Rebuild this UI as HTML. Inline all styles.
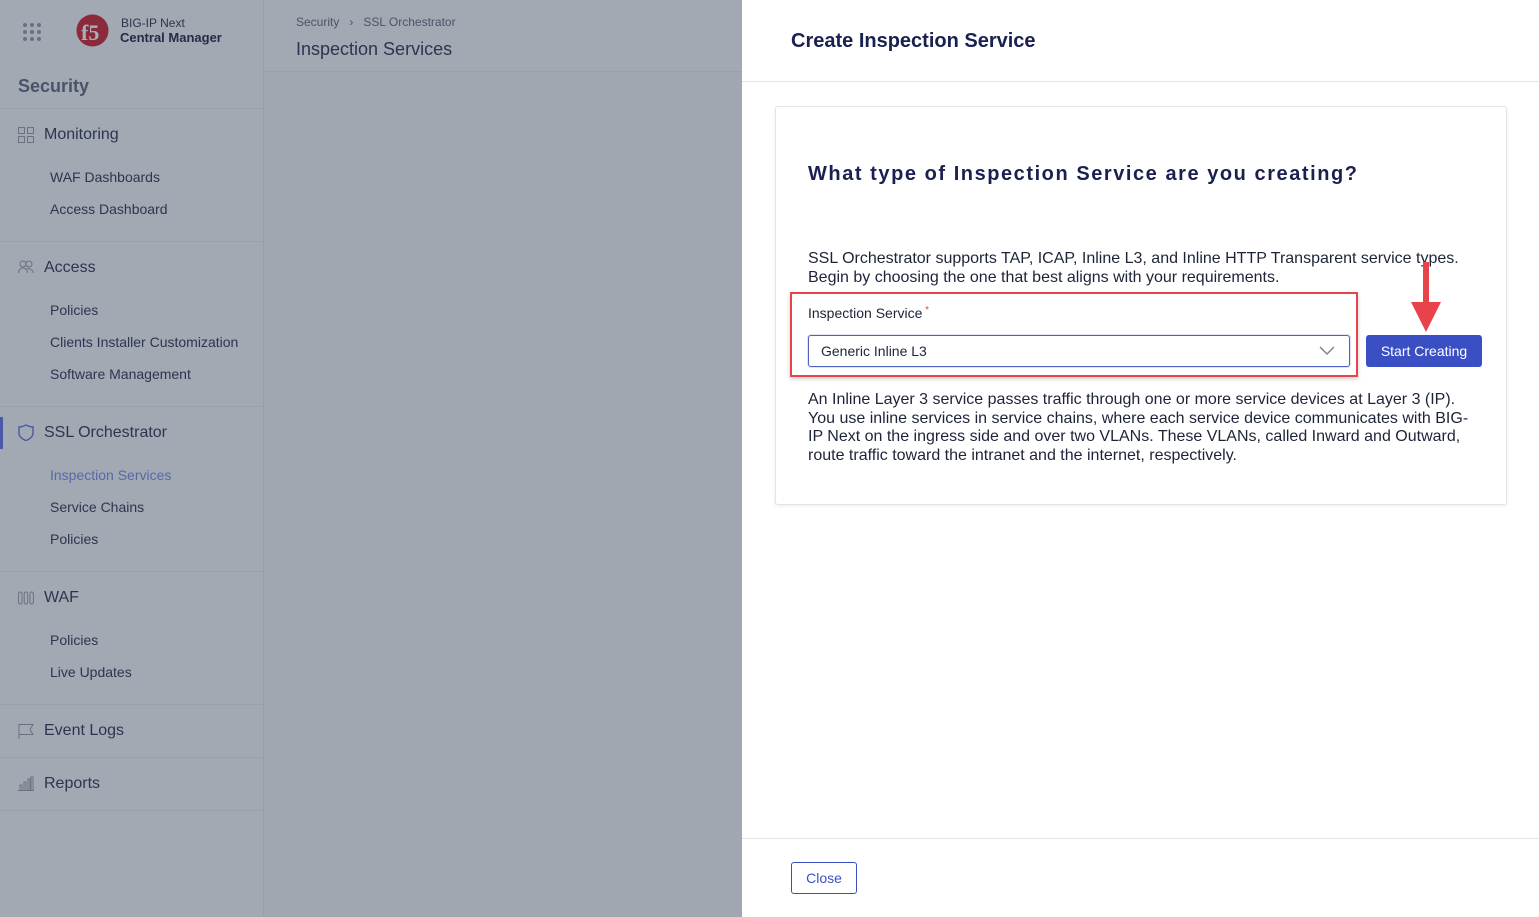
<!DOCTYPE html>
<html><head><style>
*{margin:0;padding:0;box-sizing:border-box}
body{width:1539px;height:917px;overflow:hidden;font-family:"Liberation Sans",Arial,sans-serif;background:#a0a7b0;position:relative}
.side{position:absolute;left:0;top:0;width:264px;height:917px;background:#a2a9b3;border-right:1px solid #98a0aa}
.main{position:absolute;left:264px;top:0;width:478px;height:917px;background:#a0a7b0}
.mhead{height:72px;border-bottom:1px solid #98a0aa;background:#a2a9b3}
.t{position:absolute;white-space:nowrap}
.sep{position:absolute;left:0;width:264px;height:1px;background:#98a0aa}
.grp{font-size:16px;color:#2c3550}
.sub{font-size:14px;color:#2c3550}
.panel{position:absolute;left:742px;top:0;width:797px;height:917px;background:#fff}
</style></head><body>
<div class="side">
  <svg class="t" style="left:22px;top:22px" width="20" height="20" viewBox="0 0 20 20" fill="#6a7282">
    <circle cx="3" cy="3" r="2"/><circle cx="10" cy="3" r="2"/><circle cx="17" cy="3" r="2"/>
    <circle cx="3" cy="10" r="2"/><circle cx="10" cy="10" r="2"/><circle cx="17" cy="10" r="2"/>
    <circle cx="3" cy="17" r="2"/><circle cx="10" cy="17" r="2"/><circle cx="17" cy="17" r="2"/>
  </svg>
  <svg class="t" style="left:76px;top:14px" width="33" height="33" viewBox="0 0 33 33"><circle cx="16.5" cy="16.5" r="16" fill="#8a2a3a"/><text x="5" y="26" font-family="Liberation Serif" font-size="22" fill="#a9b0ba" font-weight="bold">f5</text></svg>
  <div class="t" style="left:121px;top:16px;font-size:12px;color:#2c3550">BIG-IP Next</div>
  <div class="t" style="left:120px;top:30px;font-size:13px;color:#232c48;font-weight:bold">Central Manager</div>
  <div class="t" style="left:18px;top:76px;font-size:18px;font-weight:bold;color:#4a5468">Security</div>
  <div class="sep" style="top:108px"></div>
  <svg class="t" style="left:18px;top:127px" width="16" height="16" viewBox="0 0 16 16" fill="none" stroke="#6a7282"><rect x="0.5" y="0.5" width="6" height="6"/><rect x="9.5" y="0.5" width="6" height="6"/><rect x="0.5" y="9.5" width="6" height="6"/><rect x="9.5" y="9.5" width="6" height="6"/></svg>
  <div class="t grp" style="left:44px;top:126px">Monitoring</div>
  <div class="t sub" style="left:50px;top:169px">WAF Dashboards</div>
  <div class="t sub" style="left:50px;top:201px">Access Dashboard</div>
  <div class="sep" style="top:241px"></div>
  <svg class="t" style="left:18px;top:260px" width="16" height="14" viewBox="0 0 16 14" fill="none" stroke="#6a7282"><circle cx="5" cy="4" r="3"/><circle cx="11" cy="4" r="3"/><path d="M0.5 13c0-3 2-5 4.5-5s4.5 2 4.5 5M9 8.5c3 0 6 1.5 6.5 4.5"/></svg>
  <div class="t grp" style="left:44px;top:259px">Access</div>
  <div class="t sub" style="left:50px;top:302px">Policies</div>
  <div class="t sub" style="left:50px;top:334px">Clients Installer Customization</div>
  <div class="t sub" style="left:50px;top:366px">Software Management</div>
  <div class="sep" style="top:406px"></div>
  <div class="t" style="left:0;top:417px;width:3px;height:32px;background:#4a58a8"></div>
  <svg class="t" style="left:18px;top:424px" width="16" height="17" viewBox="0 0 16 17" fill="none" stroke="#4a58a0" stroke-width="1.4"><path d="M1 3c3 0 5-1 7-2 2 1 4 2 7 2v6c0 4-4 6.5-7 7.5C5 15.5 1 13 1 9z"/></svg>
  <div class="t grp" style="left:44px;top:424px">SSL Orchestrator</div>
  <div class="t sub" style="left:50px;top:467px;color:#5a66a8">Inspection Services</div>
  <div class="t sub" style="left:50px;top:499px">Service Chains</div>
  <div class="t sub" style="left:50px;top:531px">Policies</div>
  <div class="sep" style="top:571px"></div>
  <svg class="t" style="left:18px;top:590px" width="16" height="16" viewBox="0 0 16 16" fill="none" stroke="#6a7282"><rect x="0.5" y="2" width="3.5" height="12" rx="1.7"/><rect x="6.2" y="2" width="3.5" height="12" rx="1.7"/><rect x="11.9" y="2" width="3.5" height="12" rx="1.7"/></svg>
  <div class="t grp" style="left:44px;top:589px">WAF</div>
  <div class="t sub" style="left:50px;top:632px">Policies</div>
  <div class="t sub" style="left:50px;top:664px">Live Updates</div>
  <div class="sep" style="top:704px"></div>
  <svg class="t" style="left:18px;top:723px" width="16" height="16" viewBox="0 0 16 16" fill="none" stroke="#6a7282"><path d="M1 16V1.5h14l-3 5 3 5H1"/></svg>
  <div class="t grp" style="left:44px;top:722px">Event Logs</div>
  <div class="sep" style="top:757px"></div>
  <svg class="t" style="left:18px;top:776px" width="16" height="15" viewBox="0 0 16 15" fill="none" stroke="#6a7282"><path d="M0 14.5h16M2 14V9h2v5M6 14V6h2v8M10 14V3h2v11M13 14V1h2v13"/></svg>
  <div class="t grp" style="left:44px;top:775px">Reports</div>
  <div class="sep" style="top:810px"></div>
</div>
<div class="main">
  <div class="mhead"></div>
  <div class="t" style="left:32px;top:15px;font-size:12px;color:#4a5468">Security&nbsp;&nbsp;&nbsp;&rsaquo;&nbsp;&nbsp;&nbsp;SSL Orchestrator</div>
  <div class="t" style="left:32px;top:39px;font-size:18px;color:#2c3550">Inspection Services</div>
</div>
<div class="panel">
  <div class="t" style="left:49px;top:30px;font-size:20px;font-weight:bold;color:#1a2050">Create Inspection Service</div>
  <div class="t" style="left:0;top:81px;width:797px;height:1px;background:#e4e6ec"></div>
  <div class="t" style="left:33px;top:106px;width:732px;height:399px;border:1px solid #e2e4ea;border-radius:3px;box-shadow:0 1px 3px rgba(0,0,0,.08)"></div>
  <div class="t" style="left:66px;top:163px;font-size:20px;font-weight:bold;color:#1a2050;letter-spacing:1.55px">What type of Inspection Service are you creating?</div>
  <div class="t" style="left:66px;top:250px;font-size:16px;color:#1e2438;line-height:18.5px;width:670px;white-space:normal">SSL Orchestrator supports TAP, ICAP, Inline L3, and Inline HTTP Transparent service types. Begin by choosing the one that best aligns with your requirements.</div>
  <div class="t" style="left:48px;top:292px;width:568px;height:85px;border:2px solid #e8434a;box-shadow:0 2px 4px rgba(0,0,0,.2)"></div>
  <div class="t" style="left:66px;top:305px;font-size:14px;color:#1e2438">Inspection Service<span style="color:#e8434a;font-size:10px;vertical-align:top"> *</span></div>
  <div class="t" style="left:66px;top:335px;width:542px;height:32px;border:1px solid #5060c0;border-radius:3px;box-shadow:0 0 0 1px #dfe3f5"></div>
  <div class="t" style="left:79px;top:343px;font-size:14px;color:#1e2438">Generic Inline L3</div>
  <svg class="t" style="left:577px;top:346px" width="16" height="10" viewBox="0 0 16 10" fill="none" stroke="#7a8090" stroke-width="1.4"><path d="M1 1l7 7 7-7"/></svg>
  <div class="t" style="left:624px;top:335px;width:116px;height:32px;background:#3b4fc4;border-radius:3px;color:#fff;font-size:14px;text-align:center;line-height:32px">Start Creating</div>
  <svg class="t" style="left:668px;top:262px" width="32" height="72" viewBox="0 0 32 72"><rect x="13" y="0" width="6" height="44" fill="#e8434a"/><path d="M1 40h30L16 70z" fill="#e8434a"/></svg>
  <div class="t" style="left:66px;top:391px;font-size:16px;color:#1e2438;line-height:18.5px;width:670px;white-space:normal">An Inline Layer 3 service passes traffic through one or more service devices at Layer 3 (IP). You use inline services in service chains, where each service device communicates with BIG-IP Next on the ingress side and over two VLANs. These VLANs, called Inward and Outward, route traffic toward the intranet and the internet, respectively.</div>
  <div class="t" style="left:0;top:838px;width:797px;height:1px;background:#e4e6ec"></div>
  <div class="t" style="left:49px;top:862px;width:66px;height:32px;border:1px solid #3b4fc4;border-radius:3px;color:#3b4fc4;font-size:14px;text-align:center;line-height:30px">Close</div>
</div>
</body></html>
